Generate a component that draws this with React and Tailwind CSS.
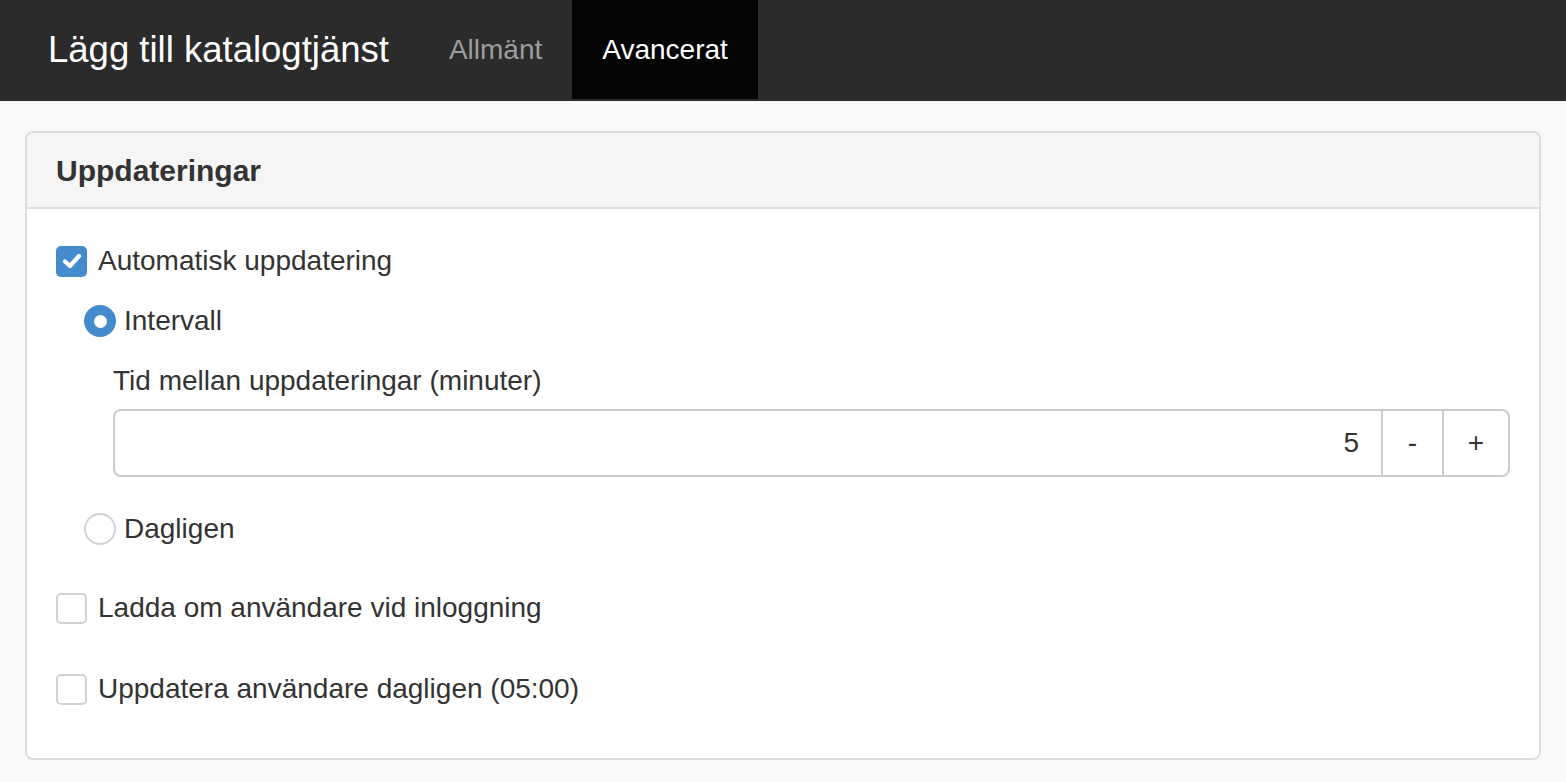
export default function App() {
  const font = { fontFamily: '"Liberation Sans", Arial, sans-serif' };
  const Check = ({ checked }) =>
    checked ? (
      <span className="w-[31px] h-[31px] rounded-[5px] bg-[#448bcd] flex items-center justify-center shrink-0">
        <svg width="22" height="22" viewBox="0 0 22 22">
          <path d="M4 11.5 L9 16 L18 6" stroke="white" strokeWidth="4.2" fill="none" strokeLinecap="round" strokeLinejoin="round" />
        </svg>
      </span>
    ) : (
      <span className="w-[31px] h-[31px] rounded-[5px] border-2 border-[#d2d2d2] bg-white shrink-0" />
    );
  const Radio = ({ checked }) =>
    checked ? (
      <span className="w-[32px] h-[32px] rounded-full bg-[#448bcd] flex items-center justify-center shrink-0">
        <span className="w-[13px] h-[13px] rounded-full bg-white" />
      </span>
    ) : (
      <span className="w-[32px] h-[32px] rounded-full border-2 border-[#d2d2d2] bg-white shrink-0" />
    );
  return (
    <div className="min-h-[782px] bg-[#f9f9f9] text-[#333]" style={font}>
      <div className="h-[101px] bg-[#2b2b2b] flex items-start">
        <div className="h-[101px] flex items-center pl-[48px] pr-[30px] text-white text-[36.5px] leading-none">
          Lägg till katalogtjänst
        </div>
        <div className="h-[99px] flex items-center px-[30px] text-[#9d9d9d] text-[28px] leading-none">Allmänt</div>
        <div className="h-[99px] flex items-center px-[30px] bg-[#050505] text-white text-[28px] leading-none">Avancerat</div>
      </div>
      <div className="pt-[30px] px-[25px] pb-[24px]">
        <div className="border-2 border-[#dddddd] rounded-[8px] bg-white overflow-hidden">
          <div className="h-[76px] bg-[#f5f5f5] border-b-2 border-[#dddddd] flex items-center pl-[29px] text-[30px] font-bold text-[#333]">
            Uppdateringar
          </div>
          <div className="pl-[29px] pr-[29px] pt-[32px] pb-[49px] text-[28px] leading-[40px]">
            <div className="flex items-center gap-[11px]">
              <Check checked />
              <span>Automatisk uppdatering</span>
            </div>
            <div className="pl-[28px] mt-[20px] flex items-center gap-[8px]">
              <Radio checked />
              <span>Intervall</span>
            </div>
            <div className="pl-[57px] mt-[20px]">Tid mellan uppdateringar (minuter)</div>
            <div className="ml-[57px] mt-[8px] h-[68px] flex border-2 border-[#cccccc] rounded-[8px] overflow-hidden">
              <div className="flex-1 flex items-center justify-end pr-[22px] text-[28px]">5</div>
              <div className="w-[61px] border-l-2 border-[#cccccc] flex items-center justify-center">-</div>
              <div className="w-[66px] border-l-2 border-[#cccccc] flex items-center justify-center">+</div>
            </div>
            <div className="pl-[28px] mt-[32px] flex items-center gap-[8px]">
              <Radio />
              <span>Dagligen</span>
            </div>
            <div className="mt-[39px] flex items-center gap-[11px]">
              <Check />
              <span>Ladda om användare vid inloggning</span>
            </div>
            <div className="mt-[41px] flex items-center gap-[11px]">
              <Check />
              <span>Uppdatera användare dagligen (05:00)</span>
            </div>
          </div>
        </div>
      </div>
    </div>
  );
}
